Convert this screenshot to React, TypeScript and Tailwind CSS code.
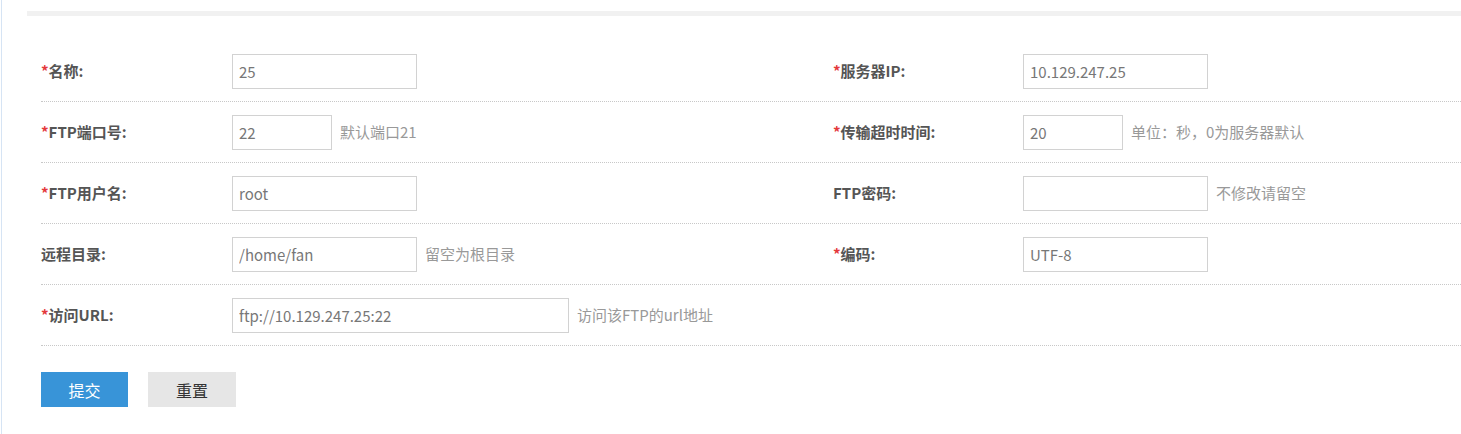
const font = { fontFamily: '"Microsoft YaHei", "Noto Sans CJK SC", sans-serif' };

type Field = {
  label: string;
  required?: boolean;
  value: string;
  width: string;
  hint?: string;
};

const rows: [Field, Field | null][] = [
  [
    { label: "名称:", required: true, value: "25", width: "w-[185px]" },
    { label: "服务器IP:", required: true, value: "10.129.247.25", width: "w-[185px]" },
  ],
  [
    { label: "FTP端口号:", required: true, value: "22", width: "w-[100px]", hint: "默认端口21" },
    { label: "传输超时时间:", required: true, value: "20", width: "w-[100px]", hint: "单位：秒，0为服务器默认" },
  ],
  [
    { label: "FTP用户名:", required: true, value: "root", width: "w-[185px]" },
    { label: "FTP密码:", value: "", width: "w-[185px]", hint: "不修改请留空" },
  ],
  [
    { label: "远程目录:", value: "/home/fan", width: "w-[185px]", hint: "留空为根目录" },
    { label: "编码:", required: true, value: "UTF-8", width: "w-[185px]" },
  ],
  [
    { label: "访问URL:", required: true, value: "ftp://10.129.247.25:22", width: "w-[337px]", hint: "访问该FTP的url地址" },
    null,
  ],
];

function Label({ f }: { f: Field }) {
  return (
    <div className="flex items-center text-[15px] font-bold text-[#555]">
      {f.required && <span className="text-[#e4393c]">*</span>}
      {f.label}
    </div>
  );
}

function Value({ f }: { f: Field }) {
  return (
    <div className="flex items-center">
      <input
        readOnly
        value={f.value}
        style={font}
        className={`${f.width} h-[35px] border border-[#d2d2d2] px-[6px] text-[15px] text-[#777] outline-none`}
      />
      {f.hint && <span className="ml-[8px] text-[15px] text-[#999]">{f.hint}</span>}
    </div>
  );
}

export default function App() {
  return (
    <div style={font} className="min-h-[434px] w-full bg-white">
      <div className="ml-px min-h-[434px] border-l border-[#d6e4f4] pl-[25px] pt-[11px]">
        <div className="h-[5px] bg-[#f1f1f1]" />
        <div className="pl-[14px] pt-[25px]">
          {rows.map(([a, b], i) => (
            <div
              key={i}
              className="grid grid-cols-[191px_601px_190px_1fr] border-b border-dotted border-[#c8c8c8] pt-[13px] pb-[12px]"
            >
              <Label f={a} />
              <Value f={a} />
              {b ? (
                <>
                  <Label f={b} />
                  <Value f={b} />
                </>
              ) : (
                <>
                  <div />
                  <div />
                </>
              )}
            </div>
          ))}
          <div className="flex gap-[20px] pt-[26px]">
            <button className="h-[35px] w-[87px] bg-[#3894d8] text-[16px] text-white">提交</button>
            <button className="h-[35px] w-[88px] bg-[#e6e6e6] text-[16px] text-[#333]">重置</button>
          </div>
        </div>
      </div>
    </div>
  );
}
